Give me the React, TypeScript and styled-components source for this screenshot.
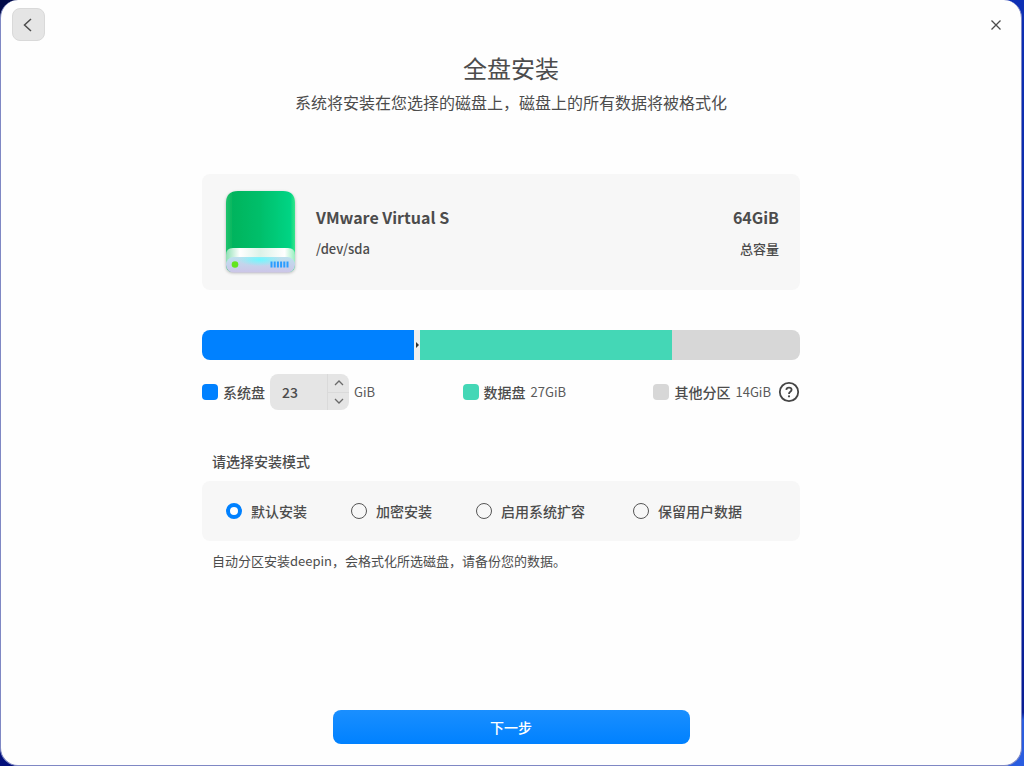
import React, { useState } from "react";
import styled, { createGlobalStyle, css } from "styled-components";

const GlobalStyle = createGlobalStyle`
  * { box-sizing: border-box; }
  body {
    margin: 0;
    color: #4c4c4c;
    font-family: "Noto Sans CJK SC", sans-serif;
    font-size: 14px;
    font-weight: 500;
    line-height: 20px;
  }
  button, input { font: inherit; color: inherit; }
`;

const Desktop = styled.div`
  min-height: 100vh;
  display: flex;
  padding: 0 2px 0 0;
  background:
    linear-gradient(#0d2fb4 0, #0a2aa8 45%, #081d94 93%, #2a5de0 94%) right / 50% 100% no-repeat,
    linear-gradient(#020b48, #03107c) left / 50% 100% no-repeat;
`;

const Window = styled.main`
  flex: 1;
  display: flex;
  flex-direction: column;
  align-items: center;
  background: #fefefe;
  border: 1px solid #7f88c4;
  border-top: 0;
  border-radius: 18px;
`;

const TitleBar = styled.div`
  align-self: stretch;
  display: flex;
  justify-content: space-between;
  align-items: flex-start;
  padding: 8px 15px 0 11px;
  height: 50px;
`;

const BackButton = styled.button`
  display: grid;
  place-items: center;
  width: 33px;
  height: 33px;
  padding: 0;
  background: #e5e5e5;
  border: 1px solid #d9d9d9;
  border-radius: 8px;
`;

const CloseButton = styled.button`
  display: grid;
  place-items: center;
  width: 20px;
  height: 33px;
  padding: 0;
  background: none;
  border: 0;
`;

const Title = styled.h1`
  margin: 0;
  font-size: 24px;
  line-height: 36px;
  font-weight: 400;
`;

const Subtitle = styled.p`
  margin: 4px 0 0;
  font-size: 16px;
  line-height: 24px;
  font-weight: 400;
`;

const Content = styled.div`
  flex: 1;
  width: calc(100% - 40px);
  max-width: 618px;
  padding: 60px 20px 32px 0;
`;

const Card = styled.section`
  display: flex;
  align-items: center;
  height: 116px;
  padding: 0 21px 0 20px;
  background: #f7f7f7;
  border-radius: 8px;
`;

const DiskInfo = styled.div<{ $end?: boolean }>`
  display: flex;
  flex-direction: column;
  gap: 10px;
  ${(p) => (p.$end ? css`margin-left: auto; text-align: right;` : css`margin-left: 16px;`)}
`;

const DiskName = styled.strong`
  font-size: 16px;
  line-height: 24px;
  font-weight: 700;
`;

const Small = styled.span`
  font-size: 13px;
  line-height: 20px;
`;

const Bar = styled.div`
  display: flex;
  height: 30px;
  margin-top: 40px;
  border-radius: 8px;
  overflow: hidden;
`;

const Segment = styled.div<{ $color: string; $grow: number }>`
  flex: ${(p) => p.$grow} 1 0;
  background: ${(p) => p.$color};
`;

const Handle = styled.div`
  display: grid;
  place-items: center;
  width: 6px;
  background: #efefef;
`;

const Legend = styled.div`
  display: flex;
  justify-content: space-between;
  align-items: center;
  margin-top: 14px;
`;

const LegendItem = styled.div`
  display: flex;
  align-items: center;
  gap: 5px;
  height: 36px;
`;

const Swatch = styled.span<{ $color: string }>`
  width: 16px;
  height: 16px;
  border-radius: 4px;
  background: ${(p) => p.$color};
`;

const Amount = styled(Small)`
  color: #5a5a5a;
  font-weight: 400;
`;

const SpinBox = styled.div`
  display: flex;
  width: 79px;
  height: 36px;
  background: #e5e5e5;
  border-radius: 8px;
  overflow: hidden;
`;

const SpinInput = styled.input`
  flex: 1;
  min-width: 0;
  padding: 0 0 0 12px;
  background: none;
  border: 0;
  outline: 0;
`;

const SpinButtons = styled.div`
  display: flex;
  flex-direction: column;
  width: 22px;
  border-left: 1px solid #dadada;
`;

const SpinButton = styled.button`
  flex: 1;
  display: grid;
  place-items: center;
  padding: 0;
  color: #6a6a6a;
  background: none;
  border: 0;

  & + & { border-top: 1px solid #dadada; }
`;

const HelpButton = styled.button`
  display: grid;
  place-items: center;
  margin-left: 2px;
  padding: 0;
  background: none;
  border: 0;
`;

const ModeGroup = styled.fieldset`
  margin: 41px 0 0;
  padding: 0;
  border: 0;
`;

const ModeTitle = styled.legend`
  padding: 0 0 0 10px;
  margin-bottom: 10px;
`;

const ModePanel = styled.div`
  display: grid;
  grid-template-columns: 125px 125px 157px auto;
  align-items: center;
  height: 60px;
  padding: 0 24px;
  background: #f7f7f7;
  border-radius: 8px;
`;

const ModeLabel = styled.label`
  display: flex;
  align-items: center;
  gap: 9px;
`;

const Radio = styled.input`
  appearance: none;
  width: 16px;
  height: 16px;
  margin: 0;
  border: 1px solid #555;
  border-radius: 50%;

  &:checked { border: 4px solid #0081ff; background: #fff; }
`;

const Note = styled(Small).attrs({ as: "p" })`
  margin: 10px 0 0;
  padding-left: 10px;
  font-weight: 400;
`;

const NextButton = styled.button`
  width: 35%;
  min-width: 240px;
  height: 34px;
  margin-bottom: 21px;
  padding: 0;
  color: #fff;
  background: linear-gradient(#1a8fff, #0081ff);
  border: 0;
  border-radius: 8px;
`;

const DiskIcon = () => (
  <svg width="78" height="92" viewBox="0 0 78 92" aria-hidden="true">
    <defs>
      <linearGradient id="shell">
        <stop offset="0" stopColor="#21c46e" />
        <stop offset=".1" stopColor="#04b45d" />
        <stop offset=".5" stopColor="#04bf6b" />
        <stop offset=".93" stopColor="#00d484" />
        <stop offset="1" stopColor="#35e58a" />
      </linearGradient>
      <linearGradient id="band">
        <stop offset="0" stopColor="#8ee0b4" />
        <stop offset=".2" stopColor="#fff" />
        <stop offset=".5" stopColor="#dcf2e8" />
        <stop offset=".85" stopColor="#fff" />
        <stop offset="1" stopColor="#98efc0" />
      </linearGradient>
      <linearGradient id="base" x2="0" y2="1">
        <stop offset="0" stopColor="#bde1ee" />
        <stop offset="1" stopColor="#cdc5e8" />
      </linearGradient>
      <radialGradient id="glow" cx=".5" cy=".2" r=".5">
        <stop offset="0" stopColor="#6ff8ff" />
        <stop offset="1" stopColor="#6ff8ff" stopOpacity="0" />
      </radialGradient>
      <filter id="shade" x="-20%" y="-20%" width="140%" height="140%">
        <feDropShadow dx="0" dy="1" stdDeviation="1.5" floodOpacity=".28" />
      </filter>
    </defs>
    <g filter="url(#shade)">
      <path d="M4 79V17Q4 5 16 5H61Q73 5 73 17V79Q73 86 66 86H11Q4 86 4 79Z" fill="url(#shell)" />
    </g>
    <path d="M4 79V69Q4 62 11 62H66Q73 62 73 69V79Z" fill="url(#band)" />
    <rect x="4" y="71" width="69" height="15.500" rx="7.500" fill="url(#base)" />
    <rect x="16" y="71" width="44" height="13" fill="url(#glow)" />
    <circle cx="13" cy="78.500" r="3.300" fill="#62e51d" />
    <path d="M49.500 75.500v6M52.700 75.500v6M55.900 75.500v6M59.100 75.500v6M62.300 75.500v6M65.500 75.500v6" stroke="#2b9dff" strokeWidth="2" />
  </svg>
);

const Chevron = ({ d, w, h, sw }: { d: string; w: number; h: number; sw: number }) => (
  <svg width={w} height={h} viewBox={`0 0 ${w} ${h}`} fill="none" stroke="currentColor" strokeWidth={sw} aria-hidden="true">
    <path d={d} />
  </svg>
);

const modes = ["默认安装", "加密安装", "启用系统扩容", "保留用户数据"];

export default function App() {
  const [size, setSize] = useState(23);
  const [mode, setMode] = useState(0);

  return (
    <Desktop>
      <GlobalStyle />
      <Window>
        <TitleBar>
          <BackButton aria-label="返回">
            <Chevron w={11} h={14} sw={1.5} d="M8 1L1.500 7l6.500 6" />
          </BackButton>
          <CloseButton aria-label="关闭">
            <Chevron w={12} h={12} sw={1.3} d="M1.500 1.500l9 9M10.500 1.500l-9 9" />
          </CloseButton>
        </TitleBar>
        <Title>全盘安装</Title>
        <Subtitle>系统将安装在您选择的磁盘上，磁盘上的所有数据将被格式化</Subtitle>
        <Content>
          <Card>
            <DiskIcon />
            <DiskInfo>
              <DiskName>VMware Virtual S</DiskName>
              <Small>/dev/sda</Small>
            </DiskInfo>
            <DiskInfo $end>
              <DiskName>64GiB</DiskName>
              <Small>总容量</Small>
            </DiskInfo>
          </Card>
          <Bar>
            <Segment $color="#0081ff" $grow={212} />
            <Handle>
              <svg width="4" height="6" viewBox="0 0 4 6" aria-hidden="true">
                <path d="M1 0l3 3-3 3z" fill="#333" />
              </svg>
            </Handle>
            <Segment $color="#44d7b6" $grow={252} />
            <Segment $color="#d7d7d7" $grow={128} />
          </Bar>
          <Legend>
            <LegendItem>
              <Swatch $color="#0081ff" />
              <label htmlFor="system-size">系统盘</label>
              <SpinBox>
                <SpinInput id="system-size" inputMode="numeric" value={size} onChange={(e) => setSize(Number(e.target.value) || 0)} />
                <SpinButtons>
                  <SpinButton aria-label="增加" onClick={() => setSize(size + 1)}>
                    <Chevron w={10} h={6} sw={1.3} d="M1 5l4-4 4 4" />
                  </SpinButton>
                  <SpinButton aria-label="减少" onClick={() => setSize(size - 1)}>
                    <Chevron w={10} h={6} sw={1.3} d="M1 1l4 4 4-4" />
                  </SpinButton>
                </SpinButtons>
              </SpinBox>
              <Amount>GiB</Amount>
            </LegendItem>
            <LegendItem>
              <Swatch $color="#44d7b6" />
              <span>数据盘</span>
              <Amount>27GiB</Amount>
            </LegendItem>
            <LegendItem>
              <Swatch $color="#d7d7d7" />
              <span>其他分区</span>
              <Amount>14GiB</Amount>
              <HelpButton aria-label="帮助">
                <svg width="22" height="22" viewBox="0 0 22 22" fill="none" stroke="#454545" strokeWidth="1.8" aria-hidden="true">
                  <circle cx="11" cy="11" r="9.200" />
                  <path d="M8.300 8.800Q8.500 6.600 11 6.600T13.600 8.800Q13.600 9.900 12.300 10.700T11 12.900" />
                  <circle cx="11" cy="15.300" r="1.100" fill="#454545" stroke="none" />
                </svg>
              </HelpButton>
            </LegendItem>
          </Legend>
          <ModeGroup>
            <ModeTitle>请选择安装模式</ModeTitle>
            <ModePanel>
              {modes.map((name, i) => (
                <ModeLabel key={name}>
                  <Radio type="radio" name="mode" checked={mode === i} onChange={() => setMode(i)} />
                  {name}
                </ModeLabel>
              ))}
            </ModePanel>
          </ModeGroup>
          <Note>自动分区安装deepin，会格式化所选磁盘，请备份您的数据。</Note>
        </Content>
        <NextButton>下一步</NextButton>
      </Window>
    </Desktop>
  );
}
